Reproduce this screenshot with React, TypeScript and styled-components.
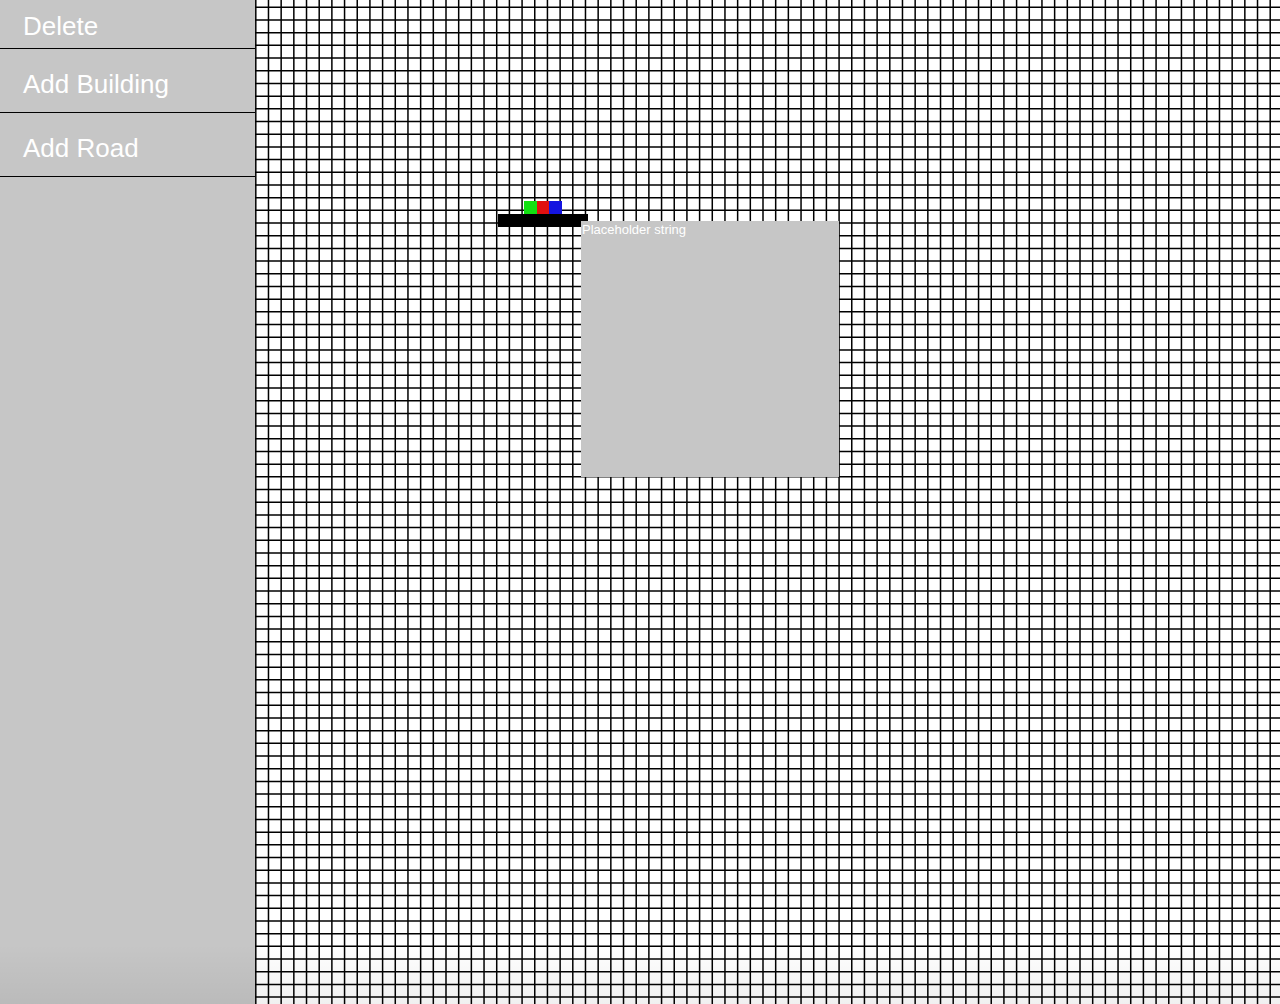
import React from "react";
import styled, { createGlobalStyle } from "styled-components";

const GlobalStyle = createGlobalStyle`
  html, body {
    margin: 0;
    padding: 0;
    overflow: hidden;
    background: #ffffff;
  }
  #root {
    height: 1004px;
  }
`;

const Layout = styled.div`
  display: flex;
  flex-direction: row;
  width: 1280px;
  height: 1004px;
  font-family: "Liberation Sans", Arial, sans-serif;
  position: relative;
`;

const Sidebar = styled.nav`
  width: 255px;
  flex: 0 0 255px;
  background: #c6c6c6;
  display: flex;
  flex-direction: column;
`;

const MenuButton = styled.div<{ $compact?: boolean }>`
  box-sizing: border-box;
  height: ${(p) => (p.$compact ? 49 : 64)}px;
  padding: ${(p) => (p.$compact ? "11px" : "20px")} 0 0 23px;
  border-bottom: 1.3px solid #000;
  color: #ffffff;
  font-size: 26px;
  line-height: 30px;
  cursor: pointer;
`;

const Board = styled.main`
  flex: 1;
  position: relative;
  height: 100%;
  background-color: #ffffff;
  overflow: hidden;
`;

const GridSvg = styled.svg`
  position: absolute;
  left: 0;
  top: 0;
  width: 1025px;
  height: 1004px;
  display: block;
`;

const Carrier = styled.div`
  position: absolute;
  left: ${498 - 255}px;
  top: 201px;
  width: 90px;
  display: flex;
  flex-direction: column;
`;

const Swatches = styled.div`
  display: flex;
  margin-left: 26px;
  height: 13px;
`;

const Swatch = styled.div<{ $color: string }>`
  width: 12.7px;
  height: 13px;
  background: ${(p) => p.$color};
`;

const Bar = styled.div`
  height: 12.5px;
  background: #000;
`;

const InfoPanel = styled.div`
  position: absolute;
  left: ${581 - 255}px;
  top: 221px;
  width: 258px;
  height: 256px;
  background: #c6c6c6;
  color: #ffffff;
  font-size: 13px;
  line-height: 15px;
  padding: 1px 1px;
  box-sizing: border-box;
`;

const BottomShade = styled.div`
  position: absolute;
  left: 0;
  right: 0;
  bottom: 0;
  height: 60px;
  pointer-events: none;
  background: linear-gradient(to bottom, rgba(0, 0, 0, 0) 0%, rgba(0, 0, 0, 0.06) 100%);
`;

const STEP_X = 12.68;
const STEP_Y = 12.69;
const W = 1025;
const H = 1004;

function Grid() {
  const vx: number[] = [];
  for (let x = 0.8; x <= W + 1; x += STEP_X) vx.push(x);
  const hy: number[] = [];
  for (let y = 7.3 - STEP_Y; y <= H + 1; y += STEP_Y) hy.push(y);
  return (
    <GridSvg viewBox={`0 0 ${W} ${H}`} aria-hidden>
      <g stroke="#000" strokeWidth={1.5}>
        {vx.map((x) => (
          <line key={`v${x}`} x1={x} y1={0} x2={x} y2={H} />
        ))}
        {hy.map((y) => (
          <line key={`h${y}`} x1={0} y1={y} x2={W} y2={y} />
        ))}
      </g>
    </GridSvg>
  );
}

export default function App() {
  return (
    <>
      <GlobalStyle />
      <Layout>
        <Sidebar>
          <MenuButton $compact>Delete</MenuButton>
          <MenuButton>Add Building</MenuButton>
          <MenuButton>Add Road</MenuButton>
        </Sidebar>
        <Board>
          <Grid />
          <Carrier>
            <Swatches>
              <Swatch $color="#12e012" />
              <Swatch $color="#e01010" />
              <Swatch $color="#1414e0" />
            </Swatches>
            <Bar />
          </Carrier>
          <InfoPanel>Placeholder string</InfoPanel>
        </Board>
        <BottomShade />
      </Layout>
    </>
  );
}
